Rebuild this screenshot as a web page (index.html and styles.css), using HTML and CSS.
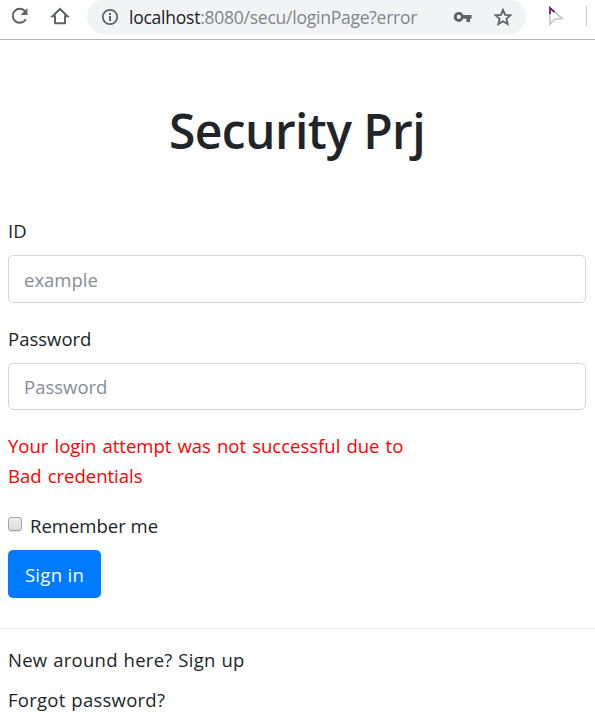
FILE: index.html
```
<!DOCTYPE html>
<html lang="en">
<head>
    <meta charset="UTF-8">
    <meta name="viewport" content="width=device-width, initial-scale=1.0">
    <title>Security Prj</title>
    <link rel="stylesheet" href="styles.css">
</head>
<body>
    <div class="toolbar">
        <svg class="reload" width="20" height="20" viewBox="0 0 20 20">
            <path d="M15.9 13.2A7 7 0 1 1 15.3 5.4" fill="none" stroke="#5f6368" stroke-width="2"/>
            <path d="M17.5 2V9h-7z" fill="#5f6368"/>
        </svg>
        <svg class="home" width="20" height="20" viewBox="0 0 20 20">
            <path d="M2.5 10.2L10 3l7.500 7.200H15V17.200H5V10.200z" fill="none" stroke="#5f6368" stroke-width="2"/>
        </svg>
        <div class="address">
            <svg class="info" width="18" height="18" viewBox="0 0 18 18">
                <circle cx="9" cy="9" r="7.200" fill="none" stroke="#5f6368" stroke-width="1.800"/>
                <path d="M9 8v5M9 5v2" stroke="#5f6368" stroke-width="2"/>
            </svg>
            <span class="url"><span class="host">localhost</span>:8080/secu/loginPage?error</span>
            <svg class="key" width="20" height="14" viewBox="0 0 20 14">
                <path fill="#5f6368" fill-rule="evenodd" d="M10.300 5A5 5 0 1 0 10.300 8.800H13.500V12H17V8.800H18.500V5zM5.800 4.800a2.100 2.100 0 1 1 0 4.200a2.100 2.100 0 0 1 0-4.200z"/>
            </svg>
            <svg class="star" width="20" height="20" viewBox="0 0 20 20">
                <path d="M10 2.800l2.100 5 5.400.45-4.100 3.550 1.250 5.300L10 14.300l-4.650 2.800 1.250-5.300L2.500 8.250l5.400-.45z" fill="none" stroke="#5f6368" stroke-width="1.800"/>
            </svg>
        </div>
        <svg class="cursor" width="18" height="22" viewBox="0 0 18 22">
            <path d="M3 3V19L8 14.200L15 13.300z" fill="none" stroke="#c4c4c8" stroke-width="1.700"/>
            <path d="M3 9V3L7.500 7" fill="none" stroke="#68217a" stroke-width="1.800"/>
        </svg>
        <span class="divider"></span>
    </div>

    <form class="login-form">
        <h1>Security Prj</h1>
        <div class="form-group">
            <label for="username">ID</label>
            <input type="text" class="form-control" id="username" placeholder="example">
        </div>
        <div class="form-group">
            <label for="password">Password</label>
            <input type="password" class="form-control password" id="password" placeholder="Password">
        </div>
        <p class="error">Your login attempt was not successful due to<br>Bad credentials</p>
        <div class="form-check">
            <input type="checkbox" id="remember">
            <label for="remember">Remember me</label>
        </div>
        <button type="button" class="btn">Sign in</button>
    </form>

    <div class="links">
        <a class="signup">New around here? Sign up</a>
        <a class="forgot">Forgot password?</a>
    </div>
</body>
</html>
```
FILE: styles.css
```
* {
    box-sizing: border-box;
}
body {
    margin: 0;
    background-color: white;
    color: #212529;
    font-family: "Open Sans", "Noto Sans", sans-serif;
    font-size: 18.5px;
    line-height: 30px;
    overflow: hidden;
}
svg {
    display: block;
    flex: none;
}
.toolbar {
    display: flex;
    align-items: flex-start;
    height: 40px;
    border-bottom: 1px solid #b4b5b7;
}
.reload {
    margin: 6px 0 0 10px;
}
.home {
    margin: 6px 0 0 20px;
}
.address {
    display: flex;
    align-items: center;
    width: 439px;
    height: 34px;
    margin-left: 17px;
    padding-left: 14px;
    background-color: #f1f3f4;
    border-radius: 17px;
}
.url {
    width: 322px;
    margin-left: 10px;
    color: #80868b;
    font-size: 17.5px;
    letter-spacing: -0.24px;
    line-height: 28px;
    padding-bottom: 1px;
    white-space: nowrap;
}
.host {
    color: #202124;
}
.key {
    margin-left: 2px;
}
.star {
    margin-left: 20px;
}
.cursor {
    margin: 5px 0 0 21px;
}
.divider {
    width: 1px;
    height: 20px;
    margin: 6px 0 0 21px;
    background-color: #ccced1;
}
.login-form {
    padding: 61px 9px 0 8px;
}
h1 {
    margin: 0 0 55px;
    font-size: 48px;
    font-weight: 600;
    letter-spacing: -0.6px;
    line-height: 60px;
    text-align: center;
}
.form-group {
    height: 108px;
}
.form-group label {
    display: block;
    margin-bottom: 9px;
}
.form-control {
    display: block;
    width: 100%;
    height: 48px;
    padding: 0 15px 0;
    border: 1px solid #d4d7da;
    border-radius: 5px;
    color: #495057;
    font: inherit;
}
.password {
    height: 47px;
}
.form-control::placeholder {
    color: #868e96;
    opacity: 1;
}
.error {
    margin: -1px 0 20px;
    color: red;
    word-spacing: 1.3px;
}
.form-check {
    display: flex;
    height: 30px;
    margin-bottom: 9px;
}
.form-check input {
    appearance: none;
    width: 14px;
    height: 14px;
    margin: 6px 8px 0 0;
    border: 1px solid #a5a5a5;
    border-radius: 3px;
    background: linear-gradient(#ededed, #dcdcdc);
    box-shadow: 0 1px 1px #ddd;
}
.btn {
    display: block;
    width: 93px;
    height: 48px;
    padding: 2px 0 0;
    border: none;
    border-radius: 5px;
    background-color: #007bff;
    color: white;
    font: inherit;
    letter-spacing: 0.3px;
    cursor: pointer;
}
.links {
    margin-top: 30px;
    padding: 16px 8px 0;
    border-top: 1px solid #e9ecef;
}
.links a {
    display: block;
    margin-bottom: 10px;
    letter-spacing: 0.25px;
    word-spacing: 0.8px;
}
```
